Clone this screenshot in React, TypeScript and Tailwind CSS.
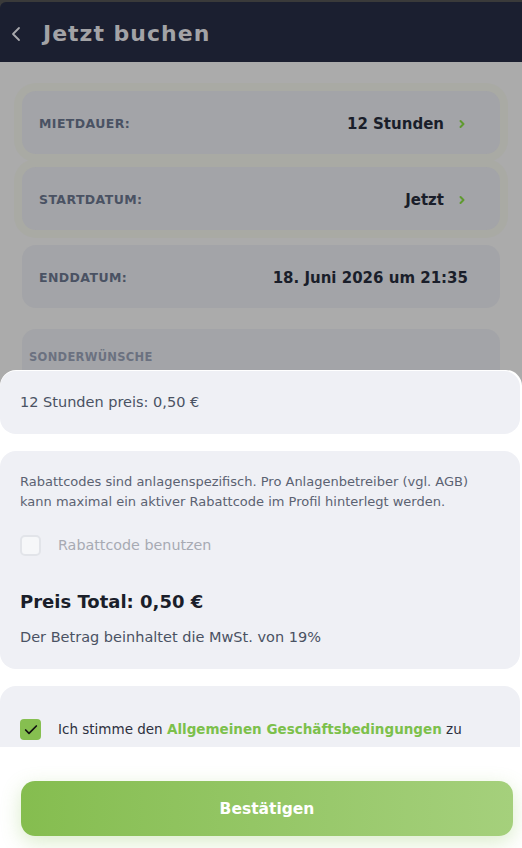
import React from "react";
import { ChevronLeft, ChevronRight, Check } from "lucide-react";

const ROWS = [
  { label: "Mietdauer:", value: "12 Stunden", arrow: true },
  { label: "Startdatum:", value: "Jetzt", arrow: true },
  { label: "Enddatum:", value: "18. Juni 2026 um 21:35", arrow: false },
];

export default function App() {
  return (
    <div className="w-[522px] h-[848px] overflow-hidden bg-[#3a3a3a] pt-[2px] relative font-['DejaVu_Sans',sans-serif]">
      {/* header */}
      <div className="h-[60px] bg-[#1b1f30] rounded-tl-[6px] flex items-center pl-[4px] pt-[3px] gap-[15px]">
        <ChevronLeft size={24} strokeWidth={1.8} className="text-[#a9a9ad]" />
        <h1 className="text-[22px] font-bold text-[#a3a3a6] tracking-[1px]">Jetzt buchen</h1>
      </div>

      {/* dimmed page */}
      <div className="h-[786px] bg-[#ababab] pt-[29px] px-[22px] flex flex-col">
        {ROWS.map((r, i) => (
          <div
            key={r.label}
            className={`h-[63px] rounded-[14px] bg-[#a3a4a8] flex items-center justify-between pl-[17px] pr-[32px] pt-[3px] ${
              i === 0
                ? "mb-[13px] shadow-[0_0_0_8px_#a9aaa4]"
                : i === 1
                ? "mb-[15px] shadow-[0_0_0_8px_#a9aaa4,0_3px_0_0_#8d8f97]"
                : "mb-[21px]"
            }`}
          >
            <span className="text-[12.5px] font-bold uppercase text-[#4a5263] tracking-[0.4px]">{r.label}</span>
            <span className="flex items-center gap-[12px] text-[15px] font-bold text-[#1a1e2a]">
              {r.value}
              {r.arrow && <ChevronRight size={12} strokeWidth={4} className="text-[#5f9a2f]" />}
            </span>
          </div>
        ))}
        <div className="h-[60px] rounded-t-[14px] bg-[#a3a4a8] pl-[7px] pt-[15px]">
          <span className="text-[11.5px] font-bold uppercase text-[#6b7180] tracking-[0.3px]">Sonderwünsche</span>
        </div>
      </div>

      {/* bottom sheet */}
      <div className="absolute left-0 top-[370px] w-[522px] h-[478px] bg-white rounded-t-[16px] overflow-hidden">
        <div className="h-[377px] overflow-hidden flex flex-col gap-[17px] pt-[1px]">
          <div className="w-[520px] h-[63px] shrink-0 rounded-[16px] bg-[#eff0f5] flex items-center px-[20px]">
            <span className="text-[14.5px] text-[#4a5263]">12 Stunden preis: 0,50 €</span>
          </div>

          <div className="w-[520px] h-[218px] shrink-0 rounded-[16px] bg-[#eff0f5] px-[20px] pt-[21px]">
            <p className="text-[13px] leading-[20px] text-[#5b6272] pr-[30px]">
              Rabattcodes sind anlagenspezifisch. Pro Anlagenbetreiber (vgl. AGB) kann maximal ein aktiver Rabattcode im Profil hinterlegt werden.
            </p>
            <div className="flex items-center gap-[17px] mt-[23px]">
              <span className="w-[21px] h-[21px] rounded-[5px] border-2 border-[#e2e4e9] bg-[#f6f7f9]" />
              <span className="text-[14.3px] text-[#a7aab3]">Rabattcode benutzen</span>
            </div>
            <h2 className="mt-[32px] text-[18px] font-bold text-[#1a1e2a]">Preis Total: 0,50 €</h2>
            <p className="mt-[12px] text-[14.5px] text-[#4a5263]">Der Betrag beinhaltet die MwSt. von 19%</p>
          </div>

          <div className="w-[520px] h-[120px] shrink-0 rounded-[16px] bg-[#eff0f5] px-[20px] pt-[33px]">
            <div className="flex items-center gap-[17px]">
              <span className="w-[21px] h-[21px] rounded-[4px] bg-[#86bf50] flex items-center justify-center">
                <Check size={16} strokeWidth={2.6} className="text-[#111]" />
              </span>
              <span className="text-[13.5px] text-[#2d3140]">
                Ich stimme den <span className="font-bold text-[#7cc04b]">Allgemeinen Geschäftsbedingungen</span> zu
              </span>
            </div>
          </div>
        </div>

        <div className="px-[21px] pt-[34px] pr-[9px]">
          <button className="w-[492px] h-[55px] rounded-[14px] bg-gradient-to-r from-[#85bd4f] to-[#a5d07c] text-white text-[15.5px] font-bold pt-[3px] shadow-[0_6px_20px_rgba(134,191,80,0.3)]">
            Bestätigen
          </button>
        </div>
      </div>
    </div>
  );
}
